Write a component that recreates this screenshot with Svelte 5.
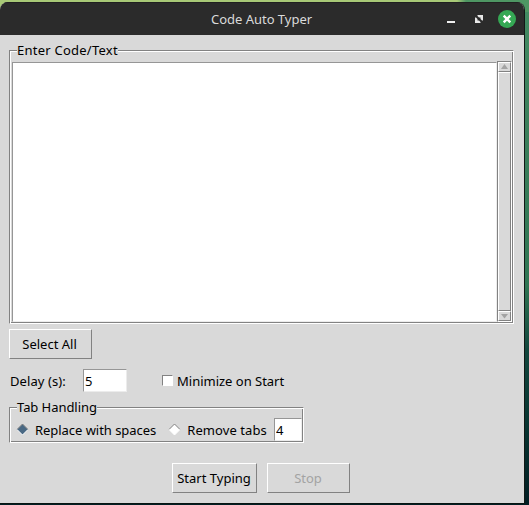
<script>
  let code = $state('');
  let delay = $state('5');
  let mode = $state('replace');
  let spaces = $state('4');
  let minimize = $state(false);
</script>

<div class="desktop">
  <div class="window">
    <header>
      <span class="title">Code Auto Typer</span>
      <svg class="controls" width="84" height="33" viewBox="0 0 84 33">
        <rect x="7" y="19" width="8" height="2" fill="#eee" />
        <path d="M37.5 13H43v5.5h-1L40.5 17V15.5H39L37.5 14zM35 15.5h1L37.5 17v1.5H39L40.5 20v1H35z" fill="#e8e8e8" />
        <circle cx="67" cy="17" r="9" fill="#35a854" />
        <path d="M63.7 13.7l6.6 6.6M70.3 13.7l-6.6 6.6" stroke="#fff" stroke-width="2.4" />
      </svg>
    </header>
    <main>
      <section class="frame editor">
        <span class="legend wide">Enter Code/Text</span>
        <textarea bind:value={code} aria-label="Code"></textarea>
        <div class="scrollbar">
          <div class="arrow"><svg width="9" height="6"><path d="M1 5L4.5 0L8 5z" fill="#a3a3a3" /></svg></div>
          <div class="thumb"></div>
          <div class="arrow"><svg width="9" height="6"><path d="M1 1h7L4.5 5.5z" fill="#a3a3a3" /></svg></div>
        </div>
      </section>
      <button class="select">Select All</button>
      <div class="options">
        <span class="delay-label">Delay (s):</span>
        <input class="delay" bind:value={delay} aria-label="Delay" />
        <button class="check" onclick={() => (minimize = !minimize)}><i class="box" class:on={minimize}></i>Minimize on Start</button>
      </div>
      <section class="frame tabs">
        <span class="legend">Tab Handling</span>
        {#each [['replace', 'Replace with spaces'], ['remove', 'Remove tabs']] as [id, label]}
          <button class="radio {id}" onclick={() => (mode = id)}>
            <svg width="13" height="13" viewBox="0 0 13 13">
              <path d="M6.5 1L12 6.5L6.5 12L1 6.5z" fill={mode === id ? '#4a6984' : '#fff'} />
              <path d="M1 6.5L6.5 1L12 6.5" fill="none" stroke="#828282" />
              <path d="M1 6.5L6.5 12L12 6.5" fill="none" stroke="#fff" />
            </svg>{label}
          </button>
        {/each}
        <input class="count" bind:value={spaces} aria-label="Spaces" />
      </section>
      <div class="actions">
        <button class="start">Start Typing</button>
        <button class="stop" disabled>Stop</button>
      </div>
    </main>
  </div>
</div>

<style>
  .desktop {
    box-sizing: border-box;
    width: 529px;
    height: 505px;
    padding-top: 2px;
    background:
      linear-gradient(90deg, #a8c977 0 457px, #4e9663 466px) 0 0 / 529px 12px no-repeat,
      linear-gradient(#438c63 0, #3c805c 120px, #2f7553 285px, #12463d 350px, #083632 420px, #021e23);
    overflow: hidden;
    font: 13px/18px "Noto Sans", sans-serif;
    color: #000;
  }
  .window {
    box-sizing: border-box;
    width: 525px;
    height: 502px;
    border-right: 1px solid #111816;
    border-bottom: 1px solid #081412;
    border-radius: 8px 8px 0 0;
    background: #d9d9d9;
    overflow: hidden;
  }
  header {
    box-sizing: border-box;
    height: 33px;
    display: flex;
    align-items: center;
    padding-left: 211px;
    background: #2b2b2b;
    border-top: 1px solid #202020;
    color: #dadada;
  }
  .title { white-space: nowrap; letter-spacing: -0.02px; }
  .controls { margin: -1px 0 0 auto; }
  main {
    padding: 15px 10px 0 9px;
    display: flex;
    flex-direction: column;
    align-items: flex-start;
  }
  .frame {
    box-sizing: border-box;
    position: relative;
    display: flex;
    border: 1px solid;
    border-color: #828282 #fff #fff #828282;
    box-shadow: inset 1px 1px #fff, inset -1px -1px #828282;
  }
  .legend {
    position: absolute;
    left: 7px;
    top: -10px;
    background: #d9d9d9;
    white-space: nowrap;
    letter-spacing: -0.06px;
  }
  .legend.wide { letter-spacing: 0.24px; }
  .editor {
    width: 505px;
    height: 274px;
    padding: 10px 1px 1px 2px;
  }
  textarea {
    box-sizing: border-box;
    width: 485px;
    height: 260px;
    margin: 1px 0 0;
    padding: 2px;
    border: 1px solid;
    border-color: #969696 #ececec #ececec #969696;
    outline: 0;
    resize: none;
    background: #fff;
    font: inherit;
  }
  .scrollbar {
    box-sizing: border-box;
    width: 15px;
    display: flex;
    flex-direction: column;
    border: 1px solid;
    border-color: #828282 #fff #fff #828282;
    background: #c3c3c3;
  }
  .arrow, .thumb {
    box-sizing: border-box;
    border: 1px solid;
    border-color: #fff #828282 #828282 #fff;
    background: #d9d9d9;
  }
  .arrow {
    height: 10px;
    display: flex;
    align-items: center;
    justify-content: center;
  }
  .thumb { flex: 1; }
  button {
    box-sizing: border-box;
    padding: 0;
    border: 1px solid;
    border-color: #fff #828282 #828282 #fff;
    background: #d9d9d9;
    color: #000;
    font: inherit;
    white-space: nowrap;
  }
  button:disabled { color: #a3a3a3; }
  .select { width: 83px; height: 30px; margin-top: 5px; padding-right: 2px; }
  .options {
    display: flex;
    align-items: center;
    height: 23px;
    margin-top: 10px;
  }
  .delay-label { width: 73px; padding-left: 1px; box-sizing: border-box; letter-spacing: 0.08px; }
  input {
    box-sizing: border-box;
    padding: 0 1px;
    border: 1px solid;
    border-color: #969696 #ececec #ececec #969696;
    outline: 0;
    background: #fff;
    font: inherit;
  }
  .delay { width: 44px; height: 23px; margin-left: 1px; }
  .check, .radio {
    display: flex;
    align-items: center;
    border: 0;
    background: none;
    letter-spacing: -0.04px;
  }
  .check { margin-left: 35px; letter-spacing: -0.01px; }
  .box {
    box-sizing: border-box;
    width: 11px;
    height: 11px;
    margin-right: 4px;
    border: 1px solid;
    border-color: #828282 #fff #fff #828282;
    background: #fff;
  }
  .box.on { background: #4a6984; }
  .tabs { width: 295px; height: 36px; margin-top: 15px; }
  .radio { height: 23px; margin-top: 10px; gap: 6px; }
  .replace { margin-left: 6px; }
  .remove { margin-left: 12px; letter-spacing: 0.08px; }
  .count { width: 28px; height: 23px; margin: 10px 1px 0 auto; }
  .actions {
    display: flex;
    gap: 10px;
    margin: 20px 0 0 163px;
  }
  .start { width: 85px; height: 30px; padding-right: 1px; }
  .stop { width: 83px; height: 30px; padding-right: 1px; }
</style>
